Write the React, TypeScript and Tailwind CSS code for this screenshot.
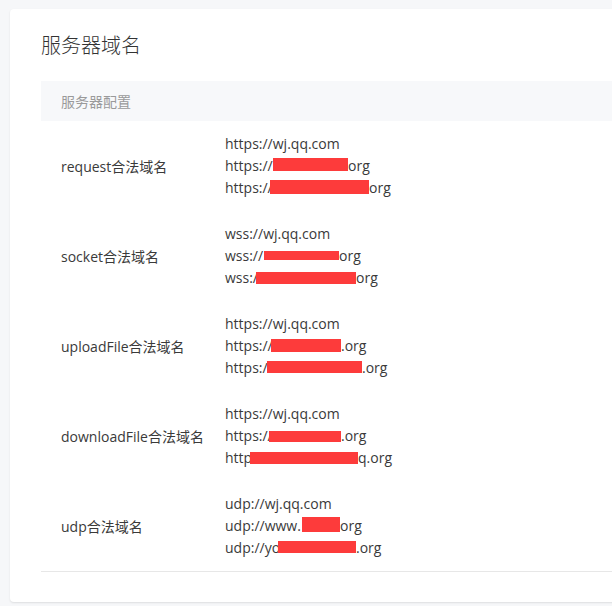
import React from "react";

type Line = {
  prefix: string;
  box?: { left: number; top: number; w: number; h: number };
  suffix?: string;
};

type Row = { label: string; lines: Line[] };

const rows: Row[] = [
  {
    label: "request合法域名",
    lines: [
      { prefix: "https://wj.qq.com" },
      { prefix: "https://", box: { left: 48, top: 3, w: 75, h: 13 }, suffix: "org" },
      { prefix: "https://", box: { left: 45, top: 3, w: 99, h: 14 }, suffix: "org" },
    ],
  },
  {
    label: "socket合法域名",
    lines: [
      { prefix: "wss://wj.qq.com" },
      { prefix: "wss://", box: { left: 39, top: 6, w: 75, h: 9 }, suffix: "org" },
      { prefix: "wss://", box: { left: 31, top: 5, w: 100, h: 12 }, suffix: "org" },
    ],
  },
  {
    label: "uploadFile合法域名",
    lines: [
      { prefix: "https://wj.qq.com" },
      { prefix: "https://", box: { left: 46, top: 4, w: 70, h: 13 }, suffix: ".org" },
      { prefix: "https://", box: { left: 42, top: 4, w: 95, h: 12 }, suffix: ".org" },
    ],
  },
  {
    label: "downloadFile合法域名",
    lines: [
      { prefix: "https://wj.qq.com" },
      { prefix: "https://", box: { left: 44, top: 6, w: 72, h: 11 }, suffix: ".org" },
      { prefix: "http", box: { left: 25, top: 5, w: 108, h: 12 }, suffix: "q.org" },
    ],
  },
  {
    label: "udp合法域名",
    lines: [
      { prefix: "udp://wj.qq.com" },
      { prefix: "udp://www.", box: { left: 77, top: 2, w: 38, h: 15 }, suffix: "org" },
      { prefix: "udp://yo", box: { left: 53, top: 4, w: 78, h: 12 }, suffix: ".org" },
    ],
  },
];

function ValueLine({ line }: { line: Line }) {
  if (!line.box) {
    return <div className="h-[22px] leading-[22px] whitespace-nowrap">{line.prefix}</div>;
  }
  const b = line.box;
  return (
    <div className="relative h-[22px] leading-[22px] whitespace-nowrap">
      <span>{line.prefix}</span>
      <span
        className="absolute bg-[#fd3b3b]"
        style={{ left: b.left, top: b.top, width: b.w, height: b.h }}
      />
      <span className="absolute top-0" style={{ left: b.left + b.w }}>
        {line.suffix}
      </span>
    </div>
  );
}

export default function App() {
  return (
    <div
      className="w-[612px] h-[606px] overflow-hidden bg-[#f6f7f9] pt-[9px] pl-[10px]"
      style={{ fontFamily: '"Open Sans", "Noto Sans CJK SC", sans-serif' }}
    >
      <div className="w-[640px] h-[593px] bg-white rounded-[4px] shadow-[0_1px_2px_rgba(0,0,0,0.1)] pl-[31px] pt-[23px]">
        <div className="text-[20px] leading-[28px] text-[#333] font-light">服务器域名</div>
        <div className="mt-[21px] h-[40px] bg-[#f7f8fa] flex items-center pl-5 text-[14px] text-[#9a9a9a]">
          服务器配置
        </div>
        <div className="border-b border-[#e7e7e7]">
          {rows.map((r) => (
            <div key={r.label} className="grid grid-cols-[184px_1fr] h-[90px] text-[14px] text-[#3a3a3a]">
              <div className="pl-5 flex items-center">{r.label}</div>
              <div className="flex flex-col justify-center">
                {r.lines.map((l, i) => (
                  <ValueLine key={i} line={l} />
                ))}
              </div>
            </div>
          ))}
        </div>
      </div>
    </div>
  );
}
